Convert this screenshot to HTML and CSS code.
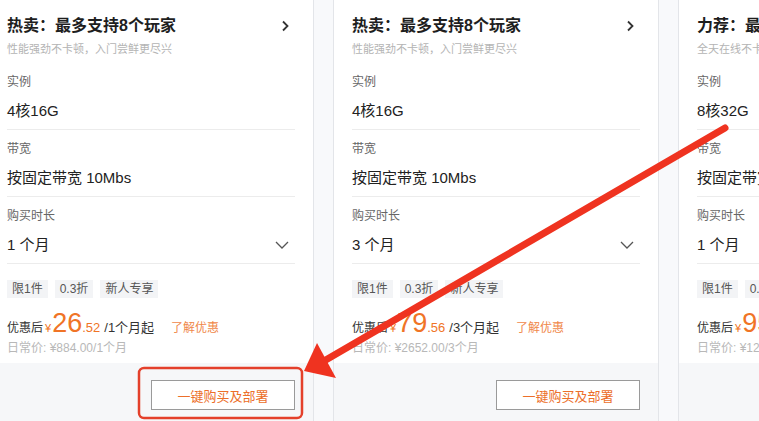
FILE: index.html
```html
<!DOCTYPE html>
<html lang="zh-CN">
<head>
<meta charset="utf-8">
<link rel="stylesheet" href="styles.css">
</head>
<body>
<div class="page">
  <div class="cards">
    <div class="card">
      <div class="body">
        <div class="head">
          <div class="title">热卖：最多支持8个玩家</div>
          <svg class="chev" width="8" height="12" viewBox="0 0 8 12"><path d="M2 1.5 L6.5 6 L2 10.5" fill="none" stroke="#333" stroke-width="1.8"/></svg>
        </div>
        <div class="sub">性能强劲不卡顿，入门尝鲜更尽兴</div>
        <div class="field"><div class="label">实例</div><div class="value">4核16G</div></div>
        <div class="field"><div class="label">带宽</div><div class="value">按固定带宽 10Mbs</div></div>
        <div class="field"><div class="label">购买时长</div><div class="value row"><span>1 个月</span><svg class="down" width="14" height="8" viewBox="0 0 14 8"><path d="M1 1 L7 7 L13 1" fill="none" stroke="#555" stroke-width="1.3"/></svg></div></div>
        <div class="tags"><span class="tag">限1件</span><span class="tag">0.3折</span><span class="tag">新人专享</span></div>
        <div class="price"><span class="pre">优惠后</span><span class="yen">¥</span><span class="big">26</span><span class="dec">.52</span><span class="per">/1个月起</span><span class="more">了解优惠</span></div>
        <div class="old">日常价: ¥884.00/1个月</div>
      </div>
      <div class="foot"><button class="buy">一键购买及部署</button></div>
    </div>
    <div class="card">
      <div class="body">
        <div class="head">
          <div class="title">热卖：最多支持8个玩家</div>
          <svg class="chev" width="8" height="12" viewBox="0 0 8 12"><path d="M2 1.5 L6.5 6 L2 10.5" fill="none" stroke="#333" stroke-width="1.8"/></svg>
        </div>
        <div class="sub">性能强劲不卡顿，入门尝鲜更尽兴</div>
        <div class="field"><div class="label">实例</div><div class="value">4核16G</div></div>
        <div class="field"><div class="label">带宽</div><div class="value">按固定带宽 10Mbs</div></div>
        <div class="field"><div class="label">购买时长</div><div class="value row"><span>3 个月</span><svg class="down" width="14" height="8" viewBox="0 0 14 8"><path d="M1 1 L7 7 L13 1" fill="none" stroke="#555" stroke-width="1.3"/></svg></div></div>
        <div class="tags"><span class="tag">限1件</span><span class="tag">0.3折</span><span class="tag">新人专享</span></div>
        <div class="price"><span class="pre">优惠后</span><span class="yen">¥</span><span class="big">79</span><span class="dec">.56</span><span class="per">/3个月起</span><span class="more">了解优惠</span></div>
        <div class="old">日常价: ¥2652.00/3个月</div>
      </div>
      <div class="foot"><button class="buy">一键购买及部署</button></div>
    </div>
    <div class="card">
      <div class="body">
        <div class="head">
          <div class="title">力荐：最多支持20个玩家</div>
        </div>
        <div class="sub">全天在线不卡顿，多人联机更畅快</div>
        <div class="field"><div class="label">实例</div><div class="value">8核32G</div></div>
        <div class="field"><div class="label">带宽</div><div class="value">按固定带宽 10Mbs</div></div>
        <div class="field"><div class="label">购买时长</div><div class="value row"><span>1 个月</span></div></div>
        <div class="tags"><span class="tag">限1件</span><span class="tag">0.3折</span><span class="tag">新人专享</span></div>
        <div class="price"><span class="pre">优惠后</span><span class="yen">¥</span><span class="big">95</span><span class="dec">.88</span><span class="per">/1个月起</span><span class="more">了解优惠</span></div>
        <div class="old">日常价: ¥1265.00/1个月</div>
      </div>
      <div class="foot"><button class="buy">一键购买及部署</button></div>
    </div>
  </div>
  <svg class="marks" width="759" height="421" viewBox="0 0 759 421">
    <rect x="139" y="368" width="163" height="50" rx="5" ry="5" fill="none" stroke="#e4402b" stroke-width="2.5"/>
    <line x1="725" y1="128" x2="324" y2="361" stroke="#ef3320" stroke-width="7" stroke-linecap="round"/>
    <polygon points="304,371 317,343 336,378" fill="#ef3320"/>
  </svg>
</div>
</body>
</html>
```
FILE: styles.css
```css
* { box-sizing: border-box; }
html, body { margin: 0; padding: 0; }
body {
  width: 759px;
  height: 421px;
  overflow: hidden;
  background: #f8f9fb;
  font-family: "Liberation Sans", "Noto Sans CJK SC", sans-serif;
  color: #222;
}
.page { position: relative; width: 759px; height: 421px; overflow: hidden; }
.cards {
  display: flex;
  gap: 19px;
  margin-left: -12px;
  height: 421px;
}
.card {
  flex: 0 0 326px;
  display: flex;
  flex-direction: column;
  background: #fff;
  border: 1px solid #e3e5e9;
  border-top: none;
  height: 440px;
}
.body { padding: 14px 18px 0 18px; }
.head {
  display: flex;
  justify-content: space-between;
  align-items: center;
  height: 24px;
  padding-right: 6px;
}
.title { font-size: 16px; font-weight: bold; line-height: 24px; color: #1e1e1e; white-space: nowrap; }
.sub { margin-top: 3px; font-size: 11px; line-height: 16px; color: #b4b4b4; white-space: nowrap; }
.field {
  padding: 10px 0 7px;
  border-bottom: 1px solid #ececec;
}
.sub + .field { margin-top: 6px; }
.label { font-size: 12px; line-height: 18px; color: #666; }
.value { margin-top: 9px; font-size: 15px; line-height: 22px; color: #222; white-space: nowrap; }
.row { display: flex; justify-content: space-between; align-items: center; padding-right: 6px; }
.tags { display: flex; gap: 7px; margin-top: 16px; }
.tag {
  background: #f3f4f6;
  color: #555;
  font-size: 12px;
  line-height: 18px;
  padding: 0 5px;
  white-space: nowrap;
}
.price {
  display: flex;
  align-items: baseline;
  margin-top: 10px;
  height: 30px;
  line-height: 30px;
  white-space: nowrap;
}
.pre { font-size: 12px; color: #333; }
.yen { font-size: 11px; color: #f07426; margin-left: 2px; }
.big { font-size: 27px; color: #f07426; margin-left: 1px; }
.dec { font-size: 13px; color: #f07426; }
.per { font-size: 13px; color: #333; margin-left: 4px; }
.more { font-size: 12px; color: #f0884a; margin-left: 17px; }
.old { margin-top: 2px; font-size: 12px; line-height: 16px; color: #b8b8b8; white-space: nowrap; }
.foot {
  flex: 1;
  margin-top: 7px;
  background: #f6f7f9;
  display: flex;
  justify-content: flex-end;
  align-items: flex-start;
  padding: 17px 18px 0 0;
}
.buy {
  width: 144px;
  height: 30px;
  background: #fff;
  border: 1px solid #9a9a9a;
  color: #ec6f2a;
  font-family: "Liberation Sans", "Noto Sans CJK SC", sans-serif;
  font-size: 13px;
  padding: 0;
}
.marks { position: absolute; left: 0; top: 0; pointer-events: none; }
```
